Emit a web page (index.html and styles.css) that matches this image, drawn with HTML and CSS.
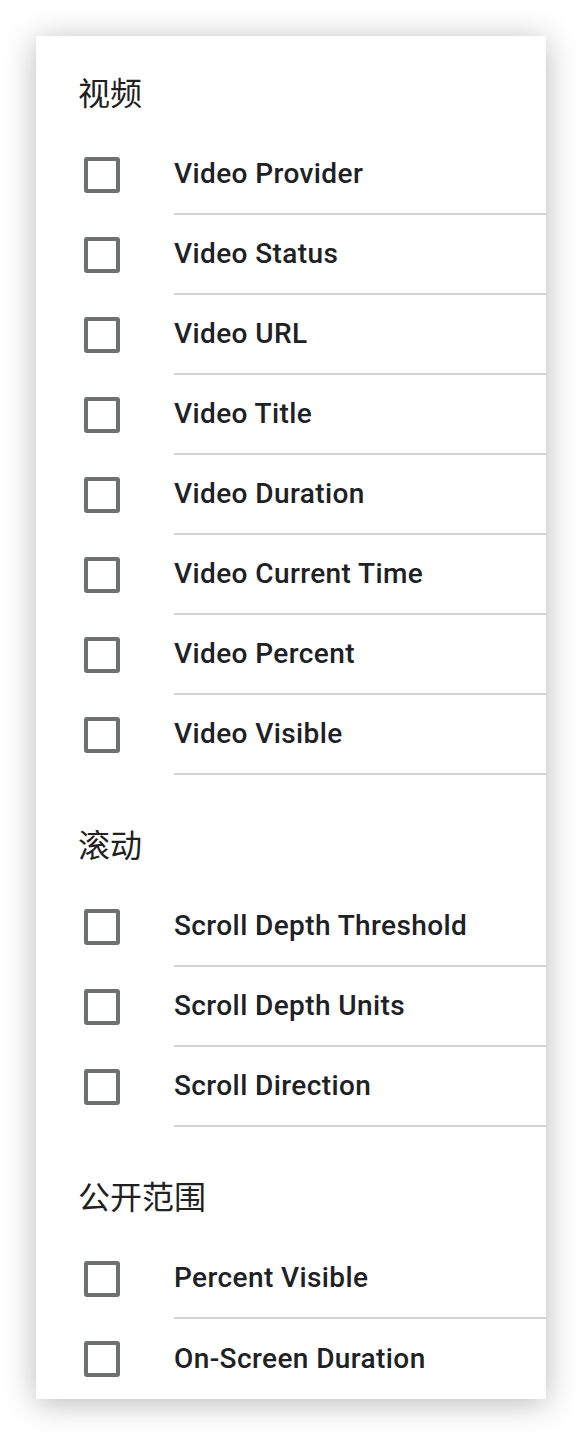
FILE: index.html
```html
<!DOCTYPE html>
<html lang="zh-CN">
<head>
<meta charset="utf-8">
<title>Variables</title>
<link rel="stylesheet" href="styles.css">
</head>
<body>
<div class="card">
  <section class="group">
    <h2 class="group-title">视频</h2>
    <ul class="list">
      <li class="item"><span class="checkbox"></span><span class="label">Video Provider</span></li>
      <li class="item"><span class="checkbox"></span><span class="label">Video Status</span></li>
      <li class="item"><span class="checkbox"></span><span class="label">Video URL</span></li>
      <li class="item"><span class="checkbox"></span><span class="label">Video Title</span></li>
      <li class="item"><span class="checkbox"></span><span class="label">Video Duration</span></li>
      <li class="item"><span class="checkbox"></span><span class="label">Video Current Time</span></li>
      <li class="item"><span class="checkbox"></span><span class="label">Video Percent</span></li>
      <li class="item"><span class="checkbox"></span><span class="label">Video Visible</span></li>
    </ul>
  </section>
  <section class="group">
    <h2 class="group-title">滚动</h2>
    <ul class="list">
      <li class="item"><span class="checkbox"></span><span class="label">Scroll Depth Threshold</span></li>
      <li class="item"><span class="checkbox"></span><span class="label">Scroll Depth Units</span></li>
      <li class="item"><span class="checkbox"></span><span class="label">Scroll Direction</span></li>
    </ul>
  </section>
  <section class="group">
    <h2 class="group-title">公开范围</h2>
    <ul class="list">
      <li class="item"><span class="checkbox"></span><span class="label">Percent Visible</span></li>
      <li class="item"><span class="checkbox"></span><span class="label">On-Screen Duration</span></li>
    </ul>
  </section>
</div>
</body>
</html>
```

FILE: styles.css
```css
html, body {
  margin: 0;
  padding: 0;
  background: #ffffff;
}

body {
  padding: 36px 0 36px 36px;
  font-family: Roboto, "Noto Sans CJK SC", sans-serif;
  color: #202124;
}

.card {
  width: 510px;
  background: #ffffff;
  box-shadow: 0 4px 30px rgba(0, 0, 0, 0.28);
}

.group + .group {
  margin-top: 13px;
}

.group-title {
  margin: 0;
  padding: 38px 0 27px 42px;
  font-family: "Noto Sans CJK SC", sans-serif;
  font-size: 32px;
  line-height: 34px;
  font-weight: 400;
  color: #212121;
}

.list {
  list-style: none;
  margin: 0;
  padding: 0;
}

.item {
  display: flex;
  align-items: center;
  height: 80px;
}

.checkbox {
  flex: none;
  width: 36px;
  height: 36px;
  box-sizing: border-box;
  margin-left: 48px;
  border: 4px solid #6c7073;
  border-radius: 3px;
}

.label {
  flex: 1;
  align-self: stretch;
  display: flex;
  align-items: center;
  box-sizing: border-box;
  margin-left: 54px;
  padding-bottom: 2px;
  border-bottom: 2px solid #d2d2d7;
  font-size: 28px;
  font-weight: 500;
  letter-spacing: 0.4px;
}

.group:last-child .item:last-child .label {
  border-bottom: none;
}
```
